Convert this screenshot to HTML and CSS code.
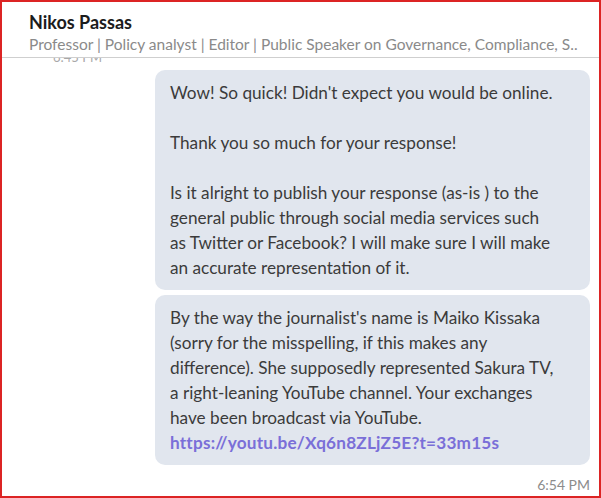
FILE: index.html
```html
<!DOCTYPE html>
<html>
<head>
<meta charset="utf-8">
<link rel="stylesheet" href="styles.css">
</head>
<body>
<div class="frame">
  <header class="header">
    <div class="name">Nikos Passas</div>
    <div class="headline">Professor | Policy analyst | Editor | Public Speaker on Governance, Compliance, S..</div>
  </header>
  <div class="thread">
    <div class="prev-time"><span>6:45 PM</span></div>
    <div class="messages">
      <div class="bubble">Wow! So quick! Didn't expect you would be online.<br><br>Thank you so much for your response!<br><br>Is it alright to publish your response (as-is ) to the<br>general public through social media services such<br>as Twitter or Facebook? I will make sure I will make<br>an accurate representation of it.</div>
      <div class="bubble">By the way the journalist's name is Maiko Kissaka<br>(sorry for the misspelling, if this makes any<br>difference). She supposedly represented Sakura TV,<br>a right-leaning YouTube channel. Your exchanges<br>have been broadcast via YouTube.<br><a class="link" href="#">https://youtu.be/Xq6n8ZLjZ5E?t=33m15s</a></div>
      <div class="time">6:54 PM</div>
    </div>
  </div>
</div>
</body>
</html>
```
FILE: styles.css
```css
html, body {
  margin: 0;
  padding: 0;
  background: #ffffff;
}
.frame {
  width: 601px;
  height: 498px;
  box-sizing: border-box;
  border: 2px solid #dc2424;
  font-family: Lato, "Open Sans", sans-serif;
  overflow: hidden;
  display: flex;
  flex-direction: column;
}
.header {
  height: 56px;
  box-sizing: border-box;
  border-bottom: 1px solid #cfcfcf;
  padding: 9px 0 0 27px;
}
.name {
  font-size: 18px;
  font-weight: 700;
  line-height: 22px;
  color: #1c1c1c;
}
.headline {
  font-size: 15.5px;
  line-height: 22px;
  color: #8a8a8a;
  white-space: nowrap;
  overflow: hidden;
}
.thread {
  flex: 1;
}
.prev-time {
  height: 5px;
  overflow: hidden;
  padding-left: 51px;
  font-size: 13px;
  color: #a8a8a8;
  line-height: 5px;
}
.prev-time span {
  display: inline-block;
  line-height: 16px;
  margin-top: -9px;
  vertical-align: top;
}
.messages {
  display: flex;
  flex-direction: column;
  align-items: flex-end;
  gap: 5px;
  padding: 7px 9px 0 0;
}
.bubble {
  width: 435px;
  box-sizing: border-box;
  background: #e1e6ee;
  border-radius: 10px;
  padding: 10px 15px;
  font-size: 17.2px;
  line-height: 25px;
  color: #3b3b3b;
  white-space: nowrap;
}
.link {
  color: #7a6fd8;
  font-weight: 700;
  letter-spacing: 0.2px;
  text-decoration: none;
}
.time {
  font-size: 14px;
  color: #8c8c8c;
  line-height: 20px;
  padding-top: 5px;
}
```
